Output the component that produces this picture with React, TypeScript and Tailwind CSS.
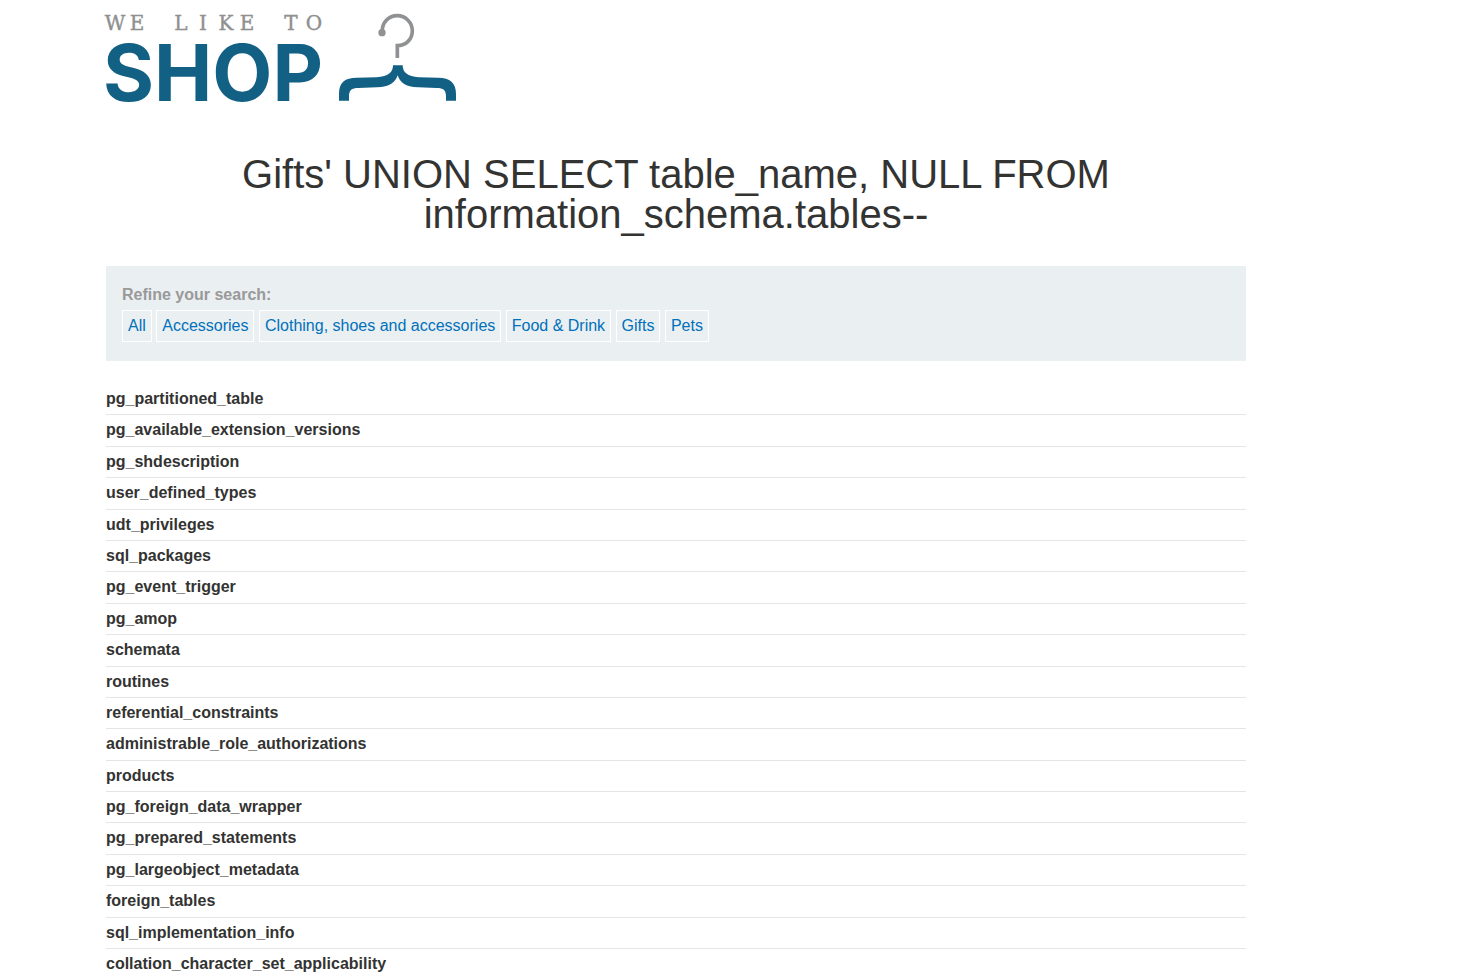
const categories = [
  "All",
  "Accessories",
  "Clothing, shoes and accessories",
  "Food & Drink",
  "Gifts",
  "Pets",
];

const results = [
  "pg_partitioned_table",
  "pg_available_extension_versions",
  "pg_shdescription",
  "user_defined_types",
  "udt_privileges",
  "sql_packages",
  "pg_event_trigger",
  "pg_amop",
  "schemata",
  "routines",
  "referential_constraints",
  "administrable_role_authorizations",
  "products",
  "pg_foreign_data_wrapper",
  "pg_prepared_statements",
  "pg_largeobject_metadata",
  "foreign_tables",
  "sql_implementation_info",
  "collation_character_set_applicability",
];

function Logo() {
  return (
    <svg width="350" height="92" viewBox="0 0 350 92" role="img" aria-label="We like to shop" className="overflow-visible">
      <text
        x="9 31 53 75 97 120 141 163 185 208"
        y="18"
        textAnchor="middle"
        fill="#8f9090"
        stroke="#8f9090"
        strokeWidth="0.4"
        className="font-['DejaVu_Serif',serif] text-[20px]"
      >
        WE LIKE TO
      </text>
      <text x="-3" y="89" fill="#126084" className="font-['Inter','Liberation_Sans',sans-serif] text-[78px] font-bold">
        SHOP
      </text>
      <svg x="233" y="0" width="117" height="90" viewBox="27 24 351 270">
        <path
          d="M157 84 C155 56 176 35 202 35 C227 35 247 56 247 80 C247 106 228 125 202 125 V162"
          fill="none"
          stroke="#8f9193"
          strokeWidth="11"
        />
        <circle cx="156" cy="86" r="11" fill="#8f9193" />
        <path
          d="M27 290 V270 C27 235 45 221 80 221 L140 220 C175 218 189 205 189 184 H218 C218 205 232 218 267 220 L325 221 C360 222 378 235 378 270 V290 H348 V278 C348 258 340 252 320 252 L265 250 C225 249 210 235 203 214 C196 235 180 249 140 250 L85 252 C65 252 57 258 57 278 V290 Z"
          fill="#126084"
        />
      </svg>
    </svg>
  );
}

export default function App() {
  return (
    <div className="min-h-screen bg-white pr-[116px] font-['Liberation_Sans',Arial,sans-serif] text-[16px] text-[#333332]">
      <div className="mx-auto max-w-[1140px]">
        <header className="flex pt-3">
          <a href="#home">
            <Logo />
          </a>
        </header>
        <main>
          <h1 className="mt-[50px] text-center text-[40px] leading-[40px]">
            Gifts' UNION SELECT table_name, NULL FROM information_schema.tables--
          </h1>
          <section className="mt-8 bg-[#eaeff2] px-4 py-[19px] leading-[20px]">
            <h2 className="font-bold text-[#999999]">Refine your search:</h2>
            <nav className="mt-[5px]">
              {categories.map((name) => (
                <span key={name}>
                  <a
                    href="#category"
                    className="inline-block border border-white p-[5px] align-top text-[#0071ba]"
                  >
                    {name}
                  </a>{" "}
                </span>
              ))}
            </nav>
          </section>
          <table className="mt-[23px] w-full border-collapse text-left leading-[1.15]">
            <tbody>
              {results.map((name) => (
                <tr key={name} className="border-b border-[#e5e5e5]">
                  <th scope="row" className="py-[6px] font-bold">
                    {name}
                  </th>
                </tr>
              ))}
            </tbody>
          </table>
        </main>
      </div>
    </div>
  );
}
